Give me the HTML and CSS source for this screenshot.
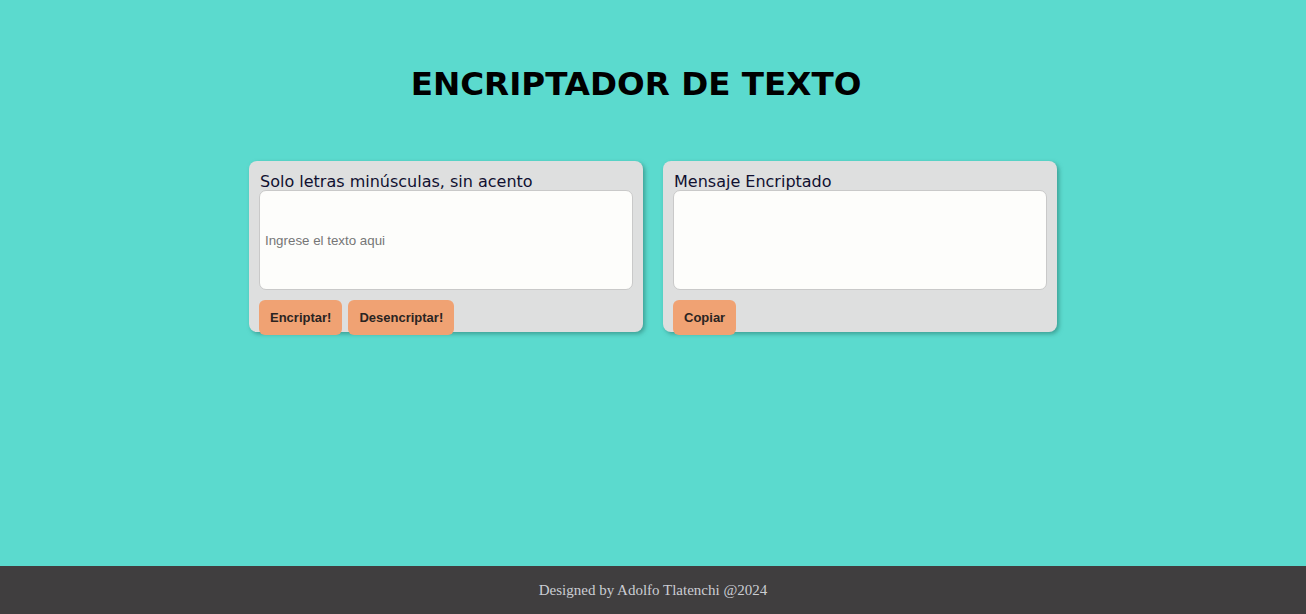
FILE: index.html
```html
<!DOCTYPE html>
<html lang="es">
<head>
<meta charset="utf-8">
<title>Encriptador de texto</title>
<link rel="stylesheet" href="styles.css">
</head>
<body>
<main class="main">
  <h1 class="title">ENCRIPTADOR DE TEXTO</h1>
  <section class="cards">
    <div class="card">
      <label class="card-label" for="entrada">Solo letras minúsculas, sin acento</label>
      <textarea id="entrada" class="box box-input" placeholder="Ingrese el texto aqui"></textarea>
      <div class="actions">
        <button class="btn">Encriptar!</button>
        <button class="btn">Desencriptar!</button>
      </div>
    </div>
    <div class="card">
      <label class="card-label" for="salida">Mensaje Encriptado</label>
      <textarea id="salida" class="box" readonly></textarea>
      <div class="actions">
        <button class="btn">Copiar</button>
      </div>
    </div>
  </section>
</main>
<footer class="footer">Designed by Adolfo Tlatenchi @2024</footer>
</body>
</html>
```

FILE: styles.css
```css
* { box-sizing: border-box; }
html, body { margin: 0; height: 100%; }
body {
  display: flex;
  flex-direction: column;
  background: #5bdace;
  font-family: "DejaVu Sans", Verdana, sans-serif;
}
.main {
  flex: 1;
  display: flex;
  flex-direction: column;
  align-items: center;
}
.title {
  margin: 64px 0 0 0;
  font-size: 32.6px;
  line-height: 40px;
  font-weight: bold;
  color: #000;
  transform: translateX(-17px);
}
.cards {
  margin-top: 57px;
  display: flex;
  gap: 20px;
}
.card {
  width: 394px;
  height: 171px;
  background: #dedfdf;
  border-radius: 8px;
  box-shadow: 2px 2px 4px rgba(40, 120, 110, 0.6);
  padding: 10px 10px 0 11px;
  display: flex;
  flex-direction: column;
}
.card-label {
  font-size: 16px;
  line-height: 19px;
  padding-top: 1px;
  color: #101030;
  display: block;
  flex-shrink: 0;
}
.box {
  flex-shrink: 0;
  width: 374px;
  height: 100px;
  margin-left: -1px;
  margin-top: -1px;
  border: 1px solid #c9c9c9;
  border-radius: 7px;
  background: #fdfdfb;
  resize: none;
  padding: 4px 5px;
  font-family: "Liberation Sans", Arial, sans-serif;
  font-size: 13.33px;
  outline: none;
}
.box-input { padding-top: 42px; }
.box::placeholder { color: #767676; }
.actions {
  flex-shrink: 0;
  margin-top: 10px;
  margin-left: -1px;
  display: flex;
  gap: 6px;
}
.btn {
  height: 35px;
  padding: 0 11px;
  border: none;
  border-radius: 6px;
  background: #f0a273;
  color: #2a2422;
  font-family: "Liberation Sans", Arial, sans-serif;
  font-weight: bold;
  font-size: 13px;
}
.footer {
  height: 48px;
  background: #403e3f;
  color: #cbcdd3;
  font-family: "Liberation Serif", "Times New Roman", serif;
  font-size: 15px;
  display: flex;
  align-items: center;
  justify-content: center;
}
```
